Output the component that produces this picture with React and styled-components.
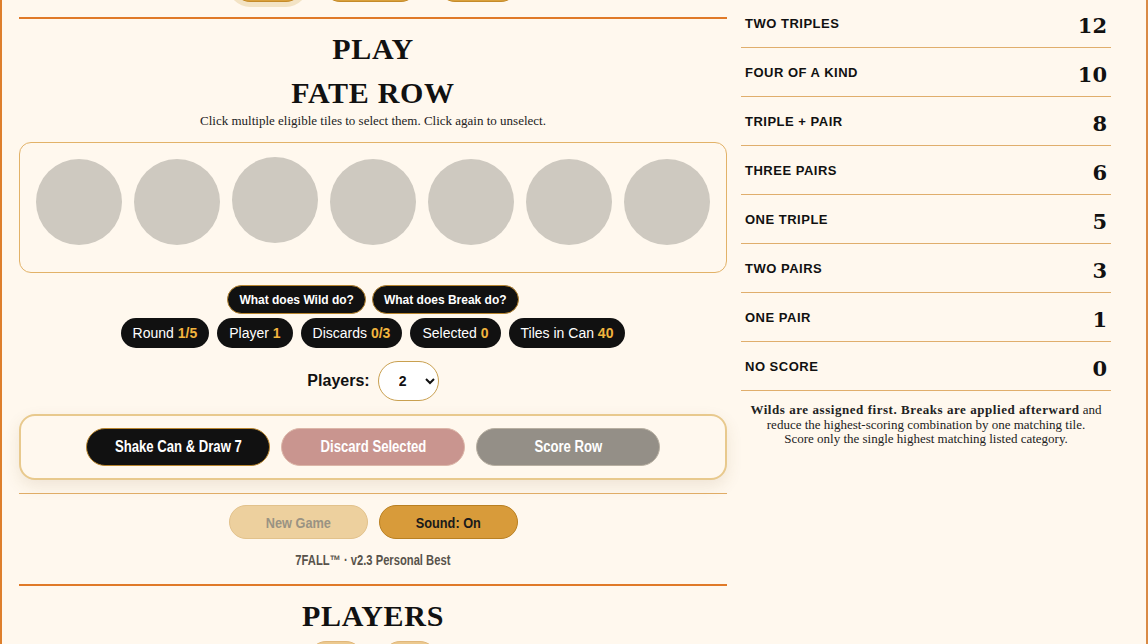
import React from 'react';
import styled, { createGlobalStyle } from 'styled-components';

const GlobalStyle = createGlobalStyle`
  html, body {
    margin: 0;
    padding: 0;
    background: #fff8ee;
    overflow: hidden;
  }
  body {
    font-family: "Liberation Sans", Arial, sans-serif;
    color: #111;
  }
`;

const Viewport = styled.div`
  width: 1148px;
  height: 644px;
  overflow: hidden;
  box-sizing: border-box;
  border-left: 2px solid #de7f2c;
  border-right: 2px solid #d98a45;
  background: #fff8ee;
`;

const Page = styled.div`
  margin-top: -36px;
  padding-left: 17px;
  display: grid;
  grid-template-columns: 708px 370px;
  column-gap: 14px;
  align-items: start;
`;

const LeftCol = styled.section`
  display: flex;
  flex-direction: column;
  align-items: stretch;
`;

const Nav = styled.nav`
  display: flex;
  justify-content: center;
  gap: 20px;
  padding-top: 4px;
  padding-left: ${p => p.$shift || 0}px;
  margin-top: ${p => p.$mt || 0}px;
`;

const NavPill = styled.button`
  width: ${p => p.$w}px;
  height: 34px;
  border-radius: 17px;
  border: 1px solid ${p => (p.$soft ? '#e0b77a' : '#c58b2a')};
  background: ${p => (p.$soft ? '#ecc98f' : '#d9a03c')};
  box-shadow: ${p => (p.$active ? '0 0 0 5px #f3e3c4' : 'none')};
  font: bold 13px "Liberation Sans", Arial, sans-serif;
  color: #222;
`;

const Rule = styled.hr`
  margin: ${p => p.$mt || 0}px 0 0;
  border: 0;
  height: ${p => (p.$thin ? 1 : 2)}px;
  background: ${p => (p.$thin ? '#e0ac66' : '#e07a28')};
`;

const Heading = styled.h2`
  margin: ${p => p.$mt || 0}px 0 0;
  font-family: "Liberation Serif", "Times New Roman", serif;
  font-weight: bold;
  font-size: 30px;
  line-height: 36px;
  text-align: center;
  color: #111;
  letter-spacing: 0.7px;
`;

const Hint = styled.p`
  margin: 2px 0 0;
  font-family: "Liberation Serif", "Times New Roman", serif;
  font-size: 13px;
  line-height: 16px;
  text-align: center;
  color: #222;
`;

const TileTray = styled.div`
  margin-top: 13px;
  border: 1px solid #e2b268;
  border-radius: 12px;
  padding: 16px 16px 27px;
  display: flex;
  gap: 12px;
`;

const Tile = styled.div`
  width: 86px;
  height: 86px;
  border-radius: 50%;
  background: #cec9c0;
  transform: ${p => (p.$lifted ? 'translateY(-2px)' : 'none')};
`;

const Row = styled.div`
  display: flex;
  justify-content: center;
  gap: ${p => p.$gap || 8}px;
  margin-top: ${p => p.$mt || 0}px;
`;

const HelpButton = styled.button`
  height: 29px;
  padding: 0 11px;
  border-radius: 15px;
  border: 1px solid #b8852e;
  background: #111;
  color: #fff;
  font: bold 12px "Liberation Sans", Arial, sans-serif;
`;

const Chip = styled.div`
  height: 30px;
  padding: 0 12px;
  border-radius: 15px;
  background: #111;
  color: #fff;
  display: flex;
  align-items: center;
  font-size: 14px;
  white-space: pre;
`;

const ChipValue = styled.span`
  color: #f2b43e;
  font-weight: bold;
`;

const PlayersField = styled.label`
  display: flex;
  justify-content: center;
  align-items: center;
  gap: 8px;
  margin-top: 13px;
  font-weight: bold;
  font-size: 16px;
`;

const Select = styled.select`
  width: 61px;
  height: 40px;
  border-radius: 20px;
  border: 1px solid #c9a050;
  background: #fff;
  padding: 0 6px 0 16px;
  font: bold 14px "Liberation Sans", Arial, sans-serif;
  color: #111;
`;

const ActionCard = styled.div`
  margin-top: 13px;
  border: 2px solid #e8c98d;
  border-radius: 16px;
  padding: 12px 0;
  display: flex;
  justify-content: center;
  gap: 11px;
  box-shadow: 0 6px 16px rgba(120, 90, 40, 0.12);
  background: #fff8ee;
`;

// narrow display face: squeeze Liberation Sans horizontally
const Narrow = styled.span`
  display: inline-block;
  white-space: nowrap;
  transform: scaleX(${p => p.$scale || 0.82});
`;

const ActionButton = styled.button`
  width: 184px;
  height: 38px;
  border-radius: 19px;
  border: 1px solid ${p => p.$border};
  background: ${p => p.$bg};
  color: #fff;
  font: bold 16px "Liberation Sans", Arial, sans-serif;
  padding: 0;
`;

const MetaButton = styled.button`
  width: 139px;
  height: 34px;
  border-radius: 17px;
  border: 1px solid ${p => p.$border};
  background: ${p => p.$bg};
  color: ${p => p.$color};
  font: bold 15px "Liberation Sans", Arial, sans-serif;
  padding: 0;
`;

const Footer = styled.p`
  margin: 12px 0 0;
  text-align: center;
  font-size: 14px;
  font-weight: bold;
  line-height: 18px;
  color: #58534b;
`;

const RightCol = styled.aside`
  padding-top: 35px;
  display: flex;
  flex-direction: column;
`;

const ScoreRow = styled.div`
  height: 48px;
  border-bottom: 1px solid #e0ae6c;
  display: flex;
  align-items: center;
  justify-content: space-between;
  padding: 0 4px;
`;

const ScoreLabel = styled.span`
  font-weight: bold;
  font-size: 13px;
  letter-spacing: 0.5px;
  color: #111;
`;

const ScoreValue = styled.span`
  font-family: "DejaVu Serif", "Liberation Serif", serif;
  font-weight: bold;
  font-size: 21px;
  padding-top: 4px;
  color: #111;
`;

const Note = styled.p`
  margin: 12px 0 0;
  text-align: center;
  font-family: "Liberation Serif", "Times New Roman", serif;
  font-size: 13px;
  line-height: 14.5px;
  color: #222;
  padding: 0 2px;
  b {
    letter-spacing: 0.55px;
  }
`;

const scores = [
  ['TWO TRIPLES', 12],
  ['FOUR OF A KIND', 10],
  ['TRIPLE + PAIR', 8],
  ['THREE PAIRS', 6],
  ['ONE TRIPLE', 5],
  ['TWO PAIRS', 3],
  ['ONE PAIR', 1],
  ['NO SCORE', 0],
];

const chips = [
  ['Round ', '1/5'],
  ['Player ', '1'],
  ['Discards ', '0/3'],
  ['Selected ', '0'],
  ['Tiles in Can ', '40'],
];

const App = () => {
  return (
    <>
      <GlobalStyle />
      <Viewport>
        <Page>
          <LeftCol>
            <Nav $shift={4}>
              <NavPill $w={70} $active>Play</NavPill>
              <NavPill $w={95}>Players</NavPill>
              <NavPill $w={80}>Rules</NavPill>
            </Nav>
            <Rule $mt={15} />
            <Heading $mt={12}>PLAY</Heading>
            <Heading $mt={8}>FATE ROW</Heading>
            <Hint>Click multiple eligible tiles to select them. Click again to unselect.</Hint>
            <TileTray>
              {[0, 1, 2, 3, 4, 5, 6].map(i => (
                <Tile key={i} $lifted={i === 2} />
              ))}
            </TileTray>
            <Row $mt={12} $gap={6}>
              <HelpButton>What does Wild do?</HelpButton>
              <HelpButton>What does Break do?</HelpButton>
            </Row>
            <Row $mt={4} $gap={8}>
              {chips.map(([label, value]) => (
                <Chip key={label}>
                  {label}
                  <ChipValue>{value}</ChipValue>
                </Chip>
              ))}
            </Row>
            <PlayersField>
              Players:
              <Select defaultValue="2">
                <option value="1">1</option>
                <option value="2">2</option>
                <option value="3">3</option>
                <option value="4">4</option>
              </Select>
            </PlayersField>
            <ActionCard>
              <ActionButton $bg="#111" $border="#b8852e">
                <Narrow>Shake Can &amp; Draw 7</Narrow>
              </ActionButton>
              <ActionButton $bg="#c9958f" $border="#dcb6a8">
                <Narrow>Discard Selected</Narrow>
              </ActionButton>
              <ActionButton $bg="#948f87" $border="#b8b0a2">
                <Narrow>Score Row</Narrow>
              </ActionButton>
            </ActionCard>
            <Rule $thin $mt={13} />
            <Row $mt={11} $gap={11}>
              <MetaButton $bg="#edd09e" $border="#e2c28c" $color="#9a9383">
                <Narrow $scale={0.85}>New Game</Narrow>
              </MetaButton>
              <MetaButton $bg="#d89b3a" $border="#b98022" $color="#1a1a1a">
                <Narrow $scale={0.85}>Sound: On</Narrow>
              </MetaButton>
            </Row>
            <Footer>
              <Narrow $scale={0.8}>7FALL™ · v2.3 Personal Best</Narrow>
            </Footer>
            <Rule $mt={15} />
            <Heading $mt={12}>PLAYERS</Heading>
            <Nav $mt={3} $shift={0}>
              <NavPill $w={54} $soft>1</NavPill>
              <NavPill $w={54} $soft>2</NavPill>
            </Nav>
          </LeftCol>
          <RightCol>
            {scores.map(([label, value]) => (
              <ScoreRow key={label}>
                <ScoreLabel>{label}</ScoreLabel>
                <ScoreValue>{value}</ScoreValue>
              </ScoreRow>
            ))}
            <Note>
              <b>Wilds are assigned first. Breaks are applied afterward</b> and
              <br />
              reduce the highest-scoring combination by one matching tile.
              <br />
              Score only the single highest matching listed category.
            </Note>
          </RightCol>
        </Page>
      </Viewport>
    </>
  );
};

export default App;
